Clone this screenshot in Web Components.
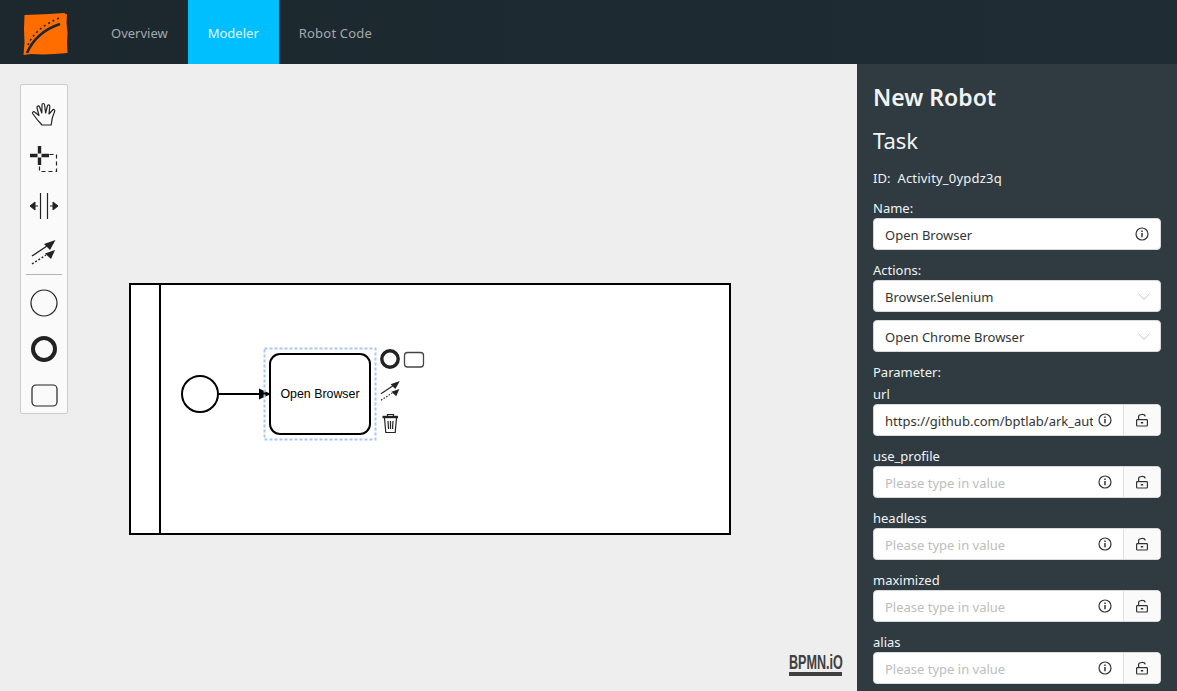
<!DOCTYPE html>
<html>
<head>
<meta charset="utf-8">
<title>New Robot</title>
<style>
    html, body { margin: 0; height: 100%; overflow: hidden; }
    body { font-family: "Noto Sans", "Open Sans", sans-serif; font-size: 13px; }
</style>
</head>
<body>
<robot-app></robot-app>

<script>
const INFO_ICON = `<svg width="14" height="14" viewBox="0 0 14 14" fill="none" stroke="#333">
    <circle cx="7" cy="7" r="6" stroke-width="1.2"></circle>
    <path d="M7 6v4.2" stroke-width="1.5"></path>
    <path d="M7 3.4v1.5" stroke-width="1.5"></path>
</svg>`;

const LOCK_ICON = `<svg width="14" height="14" viewBox="0 0 14 14" fill="none" stroke="#333">
    <rect x="1.6" y="6.6" width="10.8" height="6.4" rx="0.8" stroke-width="1.2"></rect>
    <path d="M3.6 6.5V3.6C3.6 1 9.6 .6 10.2 3.4" stroke-width="1.2"></path>
    <path d="M5.8 9.8h2.4" stroke-width="1.4"></path>
</svg>`;

const CONNECT_ICON = `<g fill="none" stroke="#222">
    <path d="M0 16 L15 6" stroke-width="1.4"></path>
    <path d="M0 24 L14 15" stroke-width="1.4" stroke-dasharray="2 1.8"></path>
    <path d="M12 4 L23.500 0 L18 10 Z" fill="#222" stroke="none"></path>
    <path d="M13 13.500 L23 10 L19 19 Z" fill="#222" stroke="none"></path>
</g>`;

class NavTab extends HTMLElement {
    constructor() {
        super();
        this.attachShadow({ mode: 'open' });
        this.shadowRoot.innerHTML = `
            <style>
                :host {
                    display: flex;
                    align-items: center;
                    padding: 1px 20px 0;
                    color: #a3a9ac;
                    font-size: 13px;
                }
                :host([active]) {
                    background: #00bfff;
                    color: #e6f8ff;
                }
            </style>
            <slot></slot>
        `;
    }
}
customElements.define('nav-tab', NavTab);

class AppHeader extends HTMLElement {
    constructor() {
        super();
        this.attachShadow({ mode: 'open' });
        this.shadowRoot.innerHTML = `
            <style>
                :host {
                    display: flex;
                    height: 64px;
                    flex: none;
                    padding-left: 23px;
                    background: linear-gradient(90deg, #1c272e, #1f2c33);
                }
                svg { margin: 13px 23px 0 0; flex: none; }
            </style>
            <svg width="45" height="43" viewBox="0 0 45 43">
                <path fill="#ff6d00" d="M1.500 2 L14 1.500 L27 1 L41 0 L44 1.500 L43.500 10 L44.500 20 L44 30 L44.500 40 L32 41 L20 41.500 L8 41 L.5 42 L1.500 30 L1 16 Z"></path>
                <path fill="none" stroke="#1c272e" stroke-width="2.600" d="M4 40 C10 26 22 16 37 11"></path>
                <path fill="none" stroke="#1c272e" stroke-width="1.600" stroke-dasharray="2 3" d="M5 32 C9 22 20 11 37 5"></path>
            </svg>
            <slot></slot>
        `;
    }
}
customElements.define('app-header', AppHeader);

class ToolPalette extends HTMLElement {
    constructor() {
        super();
        this.attachShadow({ mode: 'open' });
        this.shadowRoot.innerHTML = `
            <style>
                :host {
                    position: absolute;
                    left: 20px;
                    top: 20px;
                    width: 48px;
                    height: 330px;
                    box-sizing: border-box;
                    border: 1px solid #ccc;
                    border-radius: 2px;
                    background: #fafafa;
                    padding-top: 6px;
                    overflow: hidden;
                }
                .entry {
                    height: 46px;
                    display: flex;
                    align-items: center;
                    justify-content: center;
                }
                hr {
                    border: 0;
                    border-top: 1px solid #b5b5b5;
                    margin: -1px 5px 5px;
                }
                svg { display: block; overflow: visible; }
            </style>
            <div class="entry">
                <svg width="24" height="24" viewBox="0 0 24 24" fill="none" stroke="#222" stroke-width="1.200" stroke-linejoin="round" stroke-linecap="round">
                    <path d="M10 23 C7 20 3 15 .6 11.500 C0 10 1.500 9.200 2.600 10 L7 13.500 L5 6 C4.600 4 6.800 3.200 7.600 5 L9.800 11 L10 3 C10 1 12.400 1 12.600 3 L13.600 11 L15.400 4 C15.800 2.200 18 2.600 17.800 4.600 L17 12 L20.600 8 C21.800 6.800 23.400 8 22.600 9.600 C20.500 14 19.500 19 19.200 23 Z"></path>
                </svg>
            </div>
            <div class="entry">
                <svg width="28" height="28" viewBox="0 0 28 28" fill="none" stroke="#222">
                    <path d="M19.500 8.500 H26.500 V25.500 H9.500 V15" stroke-width="1.200" stroke-dasharray="4 3"></path>
                    <path d="M9.500 0v7.500M9.500 11.500v7.500M0 9.500h7.500M11.500 9.500h7.500" stroke-width="3.400"></path>
                </svg>
            </div>
            <div class="entry">
                <svg width="28" height="26" viewBox="0 0 28 26" fill="#222" stroke="#222">
                    <path d="M10.500 0v26M17.500 0v26" stroke-width="1.200" fill="none"></path>
                    <path d="M0 13 L5 9 V17 Z M8 13 H4" stroke-width="1"></path>
                    <path d="M28 13 L23 9 V17 Z M20 13 H24" stroke-width="1"></path>
                </svg>
            </div>
            <div class="entry">
                <svg width="24" height="24" viewBox="0 0 24 24">${CONNECT_ICON}</svg>
            </div>
            <hr>
            <div class="entry">
                <svg width="28" height="28"><circle cx="14" cy="14" r="13" fill="none" stroke="#222" stroke-width="1.200"></circle></svg>
            </div>
            <div class="entry">
                <svg width="28" height="28"><circle cx="14" cy="14" r="11" fill="none" stroke="#222" stroke-width="4"></circle></svg>
            </div>
            <div class="entry">
                <svg width="27" height="23"><rect x="1" y="1" width="25" height="21" rx="4" fill="none" stroke="#222" stroke-width="1.200"></rect></svg>
            </div>
        `;
    }
}
customElements.define('tool-palette', ToolPalette);

class BpmnDiagram extends HTMLElement {
    constructor() {
        super();
        this.attachShadow({ mode: 'open' });
        // drawn with the page's coordinates minus the 64px header
        this.shadowRoot.innerHTML = `
            <style>
                :host { position: absolute; inset: 0; display: block; }
                svg { display: block; }
                text { font-family: "Liberation Sans", Arial, sans-serif; font-size: 12.400px; fill: #000; }
            </style>
            <svg width="857" height="627" viewBox="0 64 857 627">
                <rect x="130" y="284" width="600" height="250" fill="#fff" stroke="#000" stroke-width="2"></rect>
                <path d="M160 284v250" stroke="#000" stroke-width="2"></path>
                <circle cx="200" cy="394" r="18" fill="#fff" stroke="#000" stroke-width="2"></circle>
                <rect x="270" y="354" width="100" height="80" rx="10" fill="#fff" stroke="#000" stroke-width="2"></rect>
                <path d="M218 394H262" stroke="#000" stroke-width="2"></path>
                <path d="M259 388.500 L271 394 L259 399.500 Z" fill="#000"></path>
                <rect x="264.500" y="348.500" width="111" height="91" fill="none" stroke="#a8c8fa" stroke-width="2" stroke-dasharray="3 2"></rect>
                <text x="320" y="398" text-anchor="middle">Open Browser</text>
                <circle cx="390" cy="359" r="8.200" fill="none" stroke="#222" stroke-width="3.400"></circle>
                <rect x="404.500" y="352.500" width="19" height="14.500" rx="3" fill="none" stroke="#444" stroke-width="1.300"></rect>
                <g transform="translate(381 381) scale(.8)">${CONNECT_ICON}</g>
                <g fill="none" stroke="#222" stroke-width="1.200">
                    <path d="M387.500 416v-1.500h6v1.500"></path>
                    <path d="M382.500 417h15.500" stroke-width="2.400"></path>
                    <path d="M384.500 418l1.300 14.500h9.400l1.300-14.500"></path>
                    <path d="M388 421l.5 8M390.500 421v8M393 421l-.5 8"></path>
                </g>
            </svg>
        `;
    }
}
customElements.define('bpmn-diagram', BpmnDiagram);

class BpmnLogo extends HTMLElement {
    constructor() {
        super();
        this.attachShadow({ mode: 'open' });
        this.shadowRoot.innerHTML = `
            <style>
                :host {
                    position: absolute;
                    right: 15px;
                    bottom: 15px;
                    width: 53px;
                    border-bottom: 4px solid #404040;
                    color: #404040;
                    font: bold 20px/20px "Liberation Sans", sans-serif;
                    white-space: nowrap;
                }
                span { display: block; transform-origin: 0 0; transform: scaleX(.63); }
            </style>
            <span>BPMN.iO</span>
        `;
    }
}
customElements.define('bpmn-logo', BpmnLogo);

class ModelerCanvas extends HTMLElement {
    constructor() {
        super();
        this.attachShadow({ mode: 'open' });
        this.shadowRoot.innerHTML = `
            <style>
                :host {
                    display: block;
                    position: relative;
                    flex: 1;
                    background: #eee;
                    overflow: hidden;
                }
            </style>
            <bpmn-diagram></bpmn-diagram>
            <tool-palette></tool-palette>
            <bpmn-logo></bpmn-logo>
        `;
    }
}
customElements.define('modeler-canvas', ModelerCanvas);

class FieldBox extends HTMLElement {
    static get observedAttributes() {
        return ['value', 'placeholder'];
    }

    constructor() {
        super();
        this.attachShadow({ mode: 'open' });
        this.shadowRoot.innerHTML = `
            <style>
                :host {
                    display: flex;
                    height: 32px;
                    flex: none;
                    box-sizing: border-box;
                    background: #fff;
                    border: 1px solid #d9d9d9;
                    border-radius: 4px;
                    overflow: hidden;
                    color: #333;
                    font-size: 13px;
                }
                .text {
                    flex: 1;
                    min-width: 0;
                    padding-left: 11px;
                    line-height: 33px;
                    white-space: nowrap;
                    overflow: hidden;
                }
                .text.empty { color: #bdbdbd; }
                .icon { flex: none; display: flex; align-items: center; }
                .info { width: 14px; margin: 0 11px 0 9px; }
                .arrow { width: 12px; margin: 0 10px 0 9px; }
                .addon {
                    flex: none;
                    width: 37px;
                    box-sizing: border-box;
                    border-left: 1px solid #e0e0e0;
                    background: #fafafa;
                    display: flex;
                    align-items: center;
                    justify-content: center;
                }
                .hidden { display: none; }
            </style>
            <div class="text"></div>
            <div class="icon info">${INFO_ICON}</div>
            <div class="icon arrow">
                <svg width="12" height="7" viewBox="0 0 12 7" fill="none" stroke="#c4c4c4" stroke-width="1"><path d="M.5 .5 L6 6.500 L11.500 .5"></path></svg>
            </div>
            <div class="addon">${LOCK_ICON}</div>
        `;
    }

    connectedCallback() {
        const kind = this.getAttribute('kind') || 'text';
        const root = this.shadowRoot;
        root.querySelector('.info').classList.toggle('hidden', kind === 'select');
        root.querySelector('.arrow').classList.toggle('hidden', kind !== 'select');
        root.querySelector('.addon').classList.toggle('hidden', kind !== 'param');
        if (kind === 'param') {
            root.querySelector('.info').style.margin = '0 11px 0 5px';
        }
        this.render();
    }

    attributeChangedCallback() {
        this.render();
    }

    render() {
        const text = this.shadowRoot.querySelector('.text');
        const value = this.getAttribute('value');
        text.textContent = value || this.getAttribute('placeholder') || '';
        text.classList.toggle('empty', !value);
    }
}
customElements.define('field-box', FieldBox);

class SidePanel extends HTMLElement {
    constructor() {
        super();
        this.attachShadow({ mode: 'open' });

        const params = ['use_profile', 'headless', 'maximized', 'alias'].map(name => `
            <label class="param">${name}</label>
            <field-box kind="param" placeholder="Please type in value"></field-box>
        `).join('');

        this.shadowRoot.innerHTML = `
            <style>
                :host {
                    display: flex;
                    flex-direction: column;
                    flex: none;
                    width: 320px;
                    box-sizing: border-box;
                    padding: 0 16px;
                    background: #2f3b41;
                    color: #f2f4f4;
                    font-size: 13px;
                    overflow: hidden;
                }
                h1, h2 { margin: 0; line-height: 32px; }
                h1 { font-size: 23px; font-weight: 600; margin-top: 17px; }
                h2 { font-size: 22px; font-weight: 400; margin-top: 11px; }
                .id { margin-top: 12px; line-height: 20px; }
                .id span { margin-left: 7px; letter-spacing: .2px; }
                label { display: block; line-height: 20px; flex: none; }
                .top { margin-top: 10px; }
                .param { margin-top: 10px; }
                .gap { margin-top: 8px; }
                .first { margin-top: 0; height: 22px; line-height: 24px; }
            </style>
            <h1>New Robot</h1>
            <h2>Task</h2>
            <div class="id">ID:<span>Activity_0ypdz3q</span></div>
            <label class="top">Name:</label>
            <field-box value="Open Browser"></field-box>
            <label class="top">Actions:</label>
            <field-box kind="select" value="Browser.Selenium"></field-box>
            <field-box class="gap" kind="select" value="Open Chrome Browser"></field-box>
            <label class="top">Parameter:</label>
            <label class="first">url</label>
            <field-box kind="param" value="https://github.com/bptlab/ark_automate"></field-box>
            ${params}
        `;
    }
}
customElements.define('side-panel', SidePanel);

class RobotApp extends HTMLElement {
    constructor() {
        super();
        this.attachShadow({ mode: 'open' });
        this.shadowRoot.innerHTML = `
            <style>
                :host {
                    display: flex;
                    flex-direction: column;
                    width: 1177px;
                    height: 691px;
                    overflow: hidden;
                }
                main { display: flex; flex: 1; min-height: 0; }
            </style>
            <app-header>
                <nav-tab>Overview</nav-tab>
                <nav-tab active>Modeler</nav-tab>
                <nav-tab style="letter-spacing: .2px">Robot Code</nav-tab>
            </app-header>
            <main>
                <modeler-canvas></modeler-canvas>
                <side-panel></side-panel>
            </main>
        `;
    }
}
customElements.define('robot-app', RobotApp);
</script>
</body>
</html>
